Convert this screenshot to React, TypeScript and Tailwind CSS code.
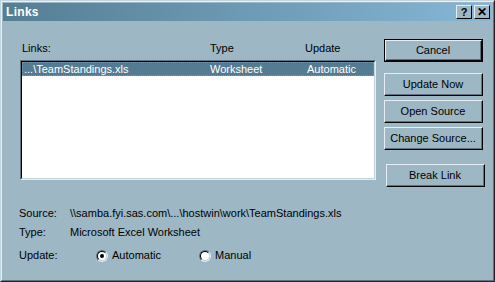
import React from 'react'

// ─── Classic push button ─────────────────────────────────────────────────────

function DlgButton({
  label,
  isDefault = false,
  className = '',
}: {
  label: string
  isDefault?: boolean
  className?: string
}) {
  return (
    <div
      className={`h-[23px] w-[99px] ${isDefault ? 'border border-black' : ''} ${className}`}
    >
      <div
        className={`
          h-full w-full flex items-center justify-center text-black
          border-t border-l border-t-[#e4eef3] border-l-[#e4eef3]
          border-b border-r border-b-black border-r-black
          ${isDefault ? 'border-b-[#5b7584] border-r-[#5b7584]' : ''}
        `}
      >
        <div className="h-full w-full flex items-center justify-center border-b border-r border-b-[#5b7584] border-r-[#5b7584]">
          {label}
        </div>
      </div>
    </div>
  )
}

function Radio({ checked }: { checked: boolean }) {
  return (
    <div className="w-[12px] h-[12px] rounded-full border border-t-[#5b7584] border-l-[#5b7584] border-b-[#e4eef3] border-r-[#e4eef3]">
      <div className="w-full h-full rounded-full border border-t-black border-l-black border-b-[#c3d3dc] border-r-[#c3d3dc] bg-white flex items-center justify-center">
        {checked && <div className="w-[4px] h-[4px] rounded-full bg-black" />}
      </div>
    </div>
  )
}

// ─── Main ────────────────────────────────────────────────────────────────────

export default function App() {
  return (
    <div
      className="w-[495px] h-[282px] bg-[#9db7c5] text-[11px] leading-[13px] text-black border border-t-[#c3d5df] border-l-[#c3d5df] border-b-[#1c262c] border-r-[#1c262c]"
      style={{ fontFamily: '"Liberation Sans", Arial, sans-serif' }}
    >
      <div className="h-full w-full border border-t-[#e9f1f5] border-l-[#e9f1f5] border-b-[#5b7584] border-r-[#5b7584] px-[1px] pt-[1px]">
        {/* title bar */}
        <div className="h-[18px] flex items-center justify-between pl-[3px] pr-[2px] bg-gradient-to-r from-[#557e93] to-[#86b7d7]">
          <span className="text-white font-bold text-[12px] tracking-[0.3px]">Links</span>
          <div className="flex gap-[2px]">
            <div className="w-[16px] h-[14px] bg-[#9db7c5] border border-t-[#e4eef3] border-l-[#e4eef3] border-b-black border-r-black flex items-center justify-center font-bold text-[11px]">
              ?
            </div>
            <div className="w-[16px] h-[14px] bg-[#9db7c5] border border-t-[#e4eef3] border-l-[#e4eef3] border-b-black border-r-black flex items-center justify-center font-bold text-[12px]">
              ✕
            </div>
          </div>
        </div>

        <div className="flex pl-[17px]">
          {/* list area */}
          <div className="w-[356px]">
            <div className="grid grid-cols-[188px_95px_1fr] mt-[21px] pl-[2px]">
              <span>Links:</span>
              <span>Type</span>
              <span>Update</span>
            </div>
            <div className="mt-[5px] h-[120px] bg-white border border-t-[#5b7584] border-l-[#5b7584] border-b-[#e4eef3] border-r-[#e4eef3]">
              <div className="h-full border border-t-black border-l-black border-b-[#c3d3dc] border-r-[#c3d3dc]">
                <div className="h-[14px] bg-[#547b91] text-white grid grid-cols-[186px_97px_1fr] items-center pl-[1px] border border-dotted border-[#c08060]">
                  <span>...\TeamStandings.xls</span>
                  <span>Worksheet</span>
                  <span>Automatic</span>
                </div>
              </div>
            </div>
          </div>

          {/* buttons */}
          <div className="ml-[8px] flex flex-col pt-[18px]">
            <DlgButton label="Cancel" isDefault />
            <DlgButton label="Update Now" className="mt-[11px]" />
            <DlgButton label="Open Source" className="mt-[4px]" />
            <DlgButton label="Change Source..." className="mt-[4px]" />
            <DlgButton label="Break Link" className="mt-[14px] ml-[2px]" />
          </div>
        </div>

        {/* details */}
        <div className="pl-[16px] mt-[20px] flex flex-col">
          <div className="flex">
            <span className="w-[51px]">Source:</span>
            <span>\\samba.fyi.sas.com\...\hostwin\work\TeamStandings.xls</span>
          </div>
          <div className="flex mt-[6px]">
            <span className="w-[51px]">Type:</span>
            <span>Microsoft Excel Worksheet</span>
          </div>
          <div className="flex items-center mt-[10px]">
            <span className="w-[77px]">Update:</span>
            <Radio checked />
            <span className="ml-[4px] w-[87px]">Automatic</span>
            <Radio checked={false} />
            <span className="ml-[4px]">Manual</span>
          </div>
        </div>
      </div>
    </div>
  )
}
